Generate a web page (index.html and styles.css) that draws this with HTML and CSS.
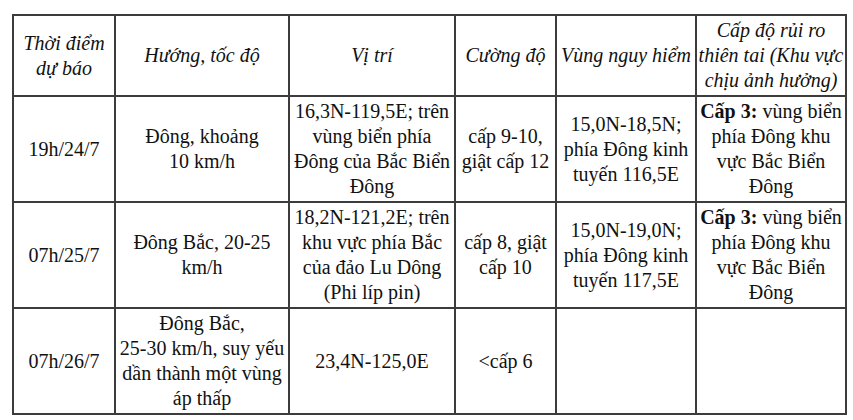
FILE: index.html
```html
<!DOCTYPE html>
<html lang="vi">
<head>
<meta charset="utf-8">
<link rel="stylesheet" href="styles.css">
</head>
<body>
<div class="page">
<table class="forecast">
  <colgroup>
    <col class="c1"><col class="c2"><col class="c3"><col class="c4"><col class="c5"><col class="c6">
  </colgroup>
  <thead>
    <tr class="head">
      <th>Thời điểm<br>dự báo</th>
      <th>Hướng, tốc độ</th>
      <th>Vị trí</th>
      <th>Cường độ</th>
      <th>Vùng nguy hiểm</th>
      <th>Cấp độ rủi ro<br>thiên tai (Khu vực<br>chịu ảnh hưởng)</th>
    </tr>
  </thead>
  <tbody>
    <tr>
      <td>19h/24/7</td>
      <td>Đông, khoảng<br>10 km/h</td>
      <td>16,3N-119,5E; trên<br>vùng biển phía<br>Đông của Bắc Biển<br>Đông</td>
      <td>cấp 9-10,<br>giật cấp 12</td>
      <td>15,0N-18,5N;<br>phía Đông kinh<br>tuyến 116,5E</td>
      <td><b>Cấp 3:</b> vùng biển<br>phía Đông khu<br>vực Bắc Biển<br>Đông</td>
    </tr>
    <tr>
      <td>07h/25/7</td>
      <td>Đông Bắc, 20-25<br>km/h</td>
      <td>18,2N-121,2E; trên<br>khu vực phía Bắc<br>của đảo Lu Dông<br>(Phi líp pin)</td>
      <td>cấp 8, giật<br>cấp 10</td>
      <td>15,0N-19,0N;<br>phía Đông kinh<br>tuyến 117,5E</td>
      <td><b>Cấp 3:</b> vùng biển<br>phía Đông khu<br>vực Bắc Biển<br>Đông</td>
    </tr>
    <tr>
      <td>07h/26/7</td>
      <td>Đông Bắc,<br>25-30 km/h, suy yếu<br>dần thành một vùng<br>áp thấp</td>
      <td>23,4N-125,0E</td>
      <td>&lt;cấp 6</td>
      <td></td>
      <td></td>
    </tr>
  </tbody>
</table>
</div>
</body>
</html>
```
FILE: styles.css
```css
html, body {
  margin: 0;
  padding: 0;
  background: #fff;
}
.page {
  padding: 14px 0 0 12px;
}
.forecast {
  border-collapse: collapse;
  table-layout: fixed;
  width: 835px;
  font-family: "Liberation Serif", "Times New Roman", serif;
  font-size: 20px;
  line-height: 25px;
  color: #111;
}
.c1 { width: 102px; }
.c2 { width: 174px; }
.c3 { width: 166px; }
.c4 { width: 101px; }
.c5 { width: 140px; }
.c6 { width: 150px; }
.forecast th,
.forecast td {
  border: 2px solid #3c3c3c;
  padding: 2px 0;
  text-align: center;
  vertical-align: middle;
  white-space: nowrap;
}
.forecast th {
  font-weight: normal;
  font-style: italic;
}
.forecast b {
  font-weight: bold;
}
```
